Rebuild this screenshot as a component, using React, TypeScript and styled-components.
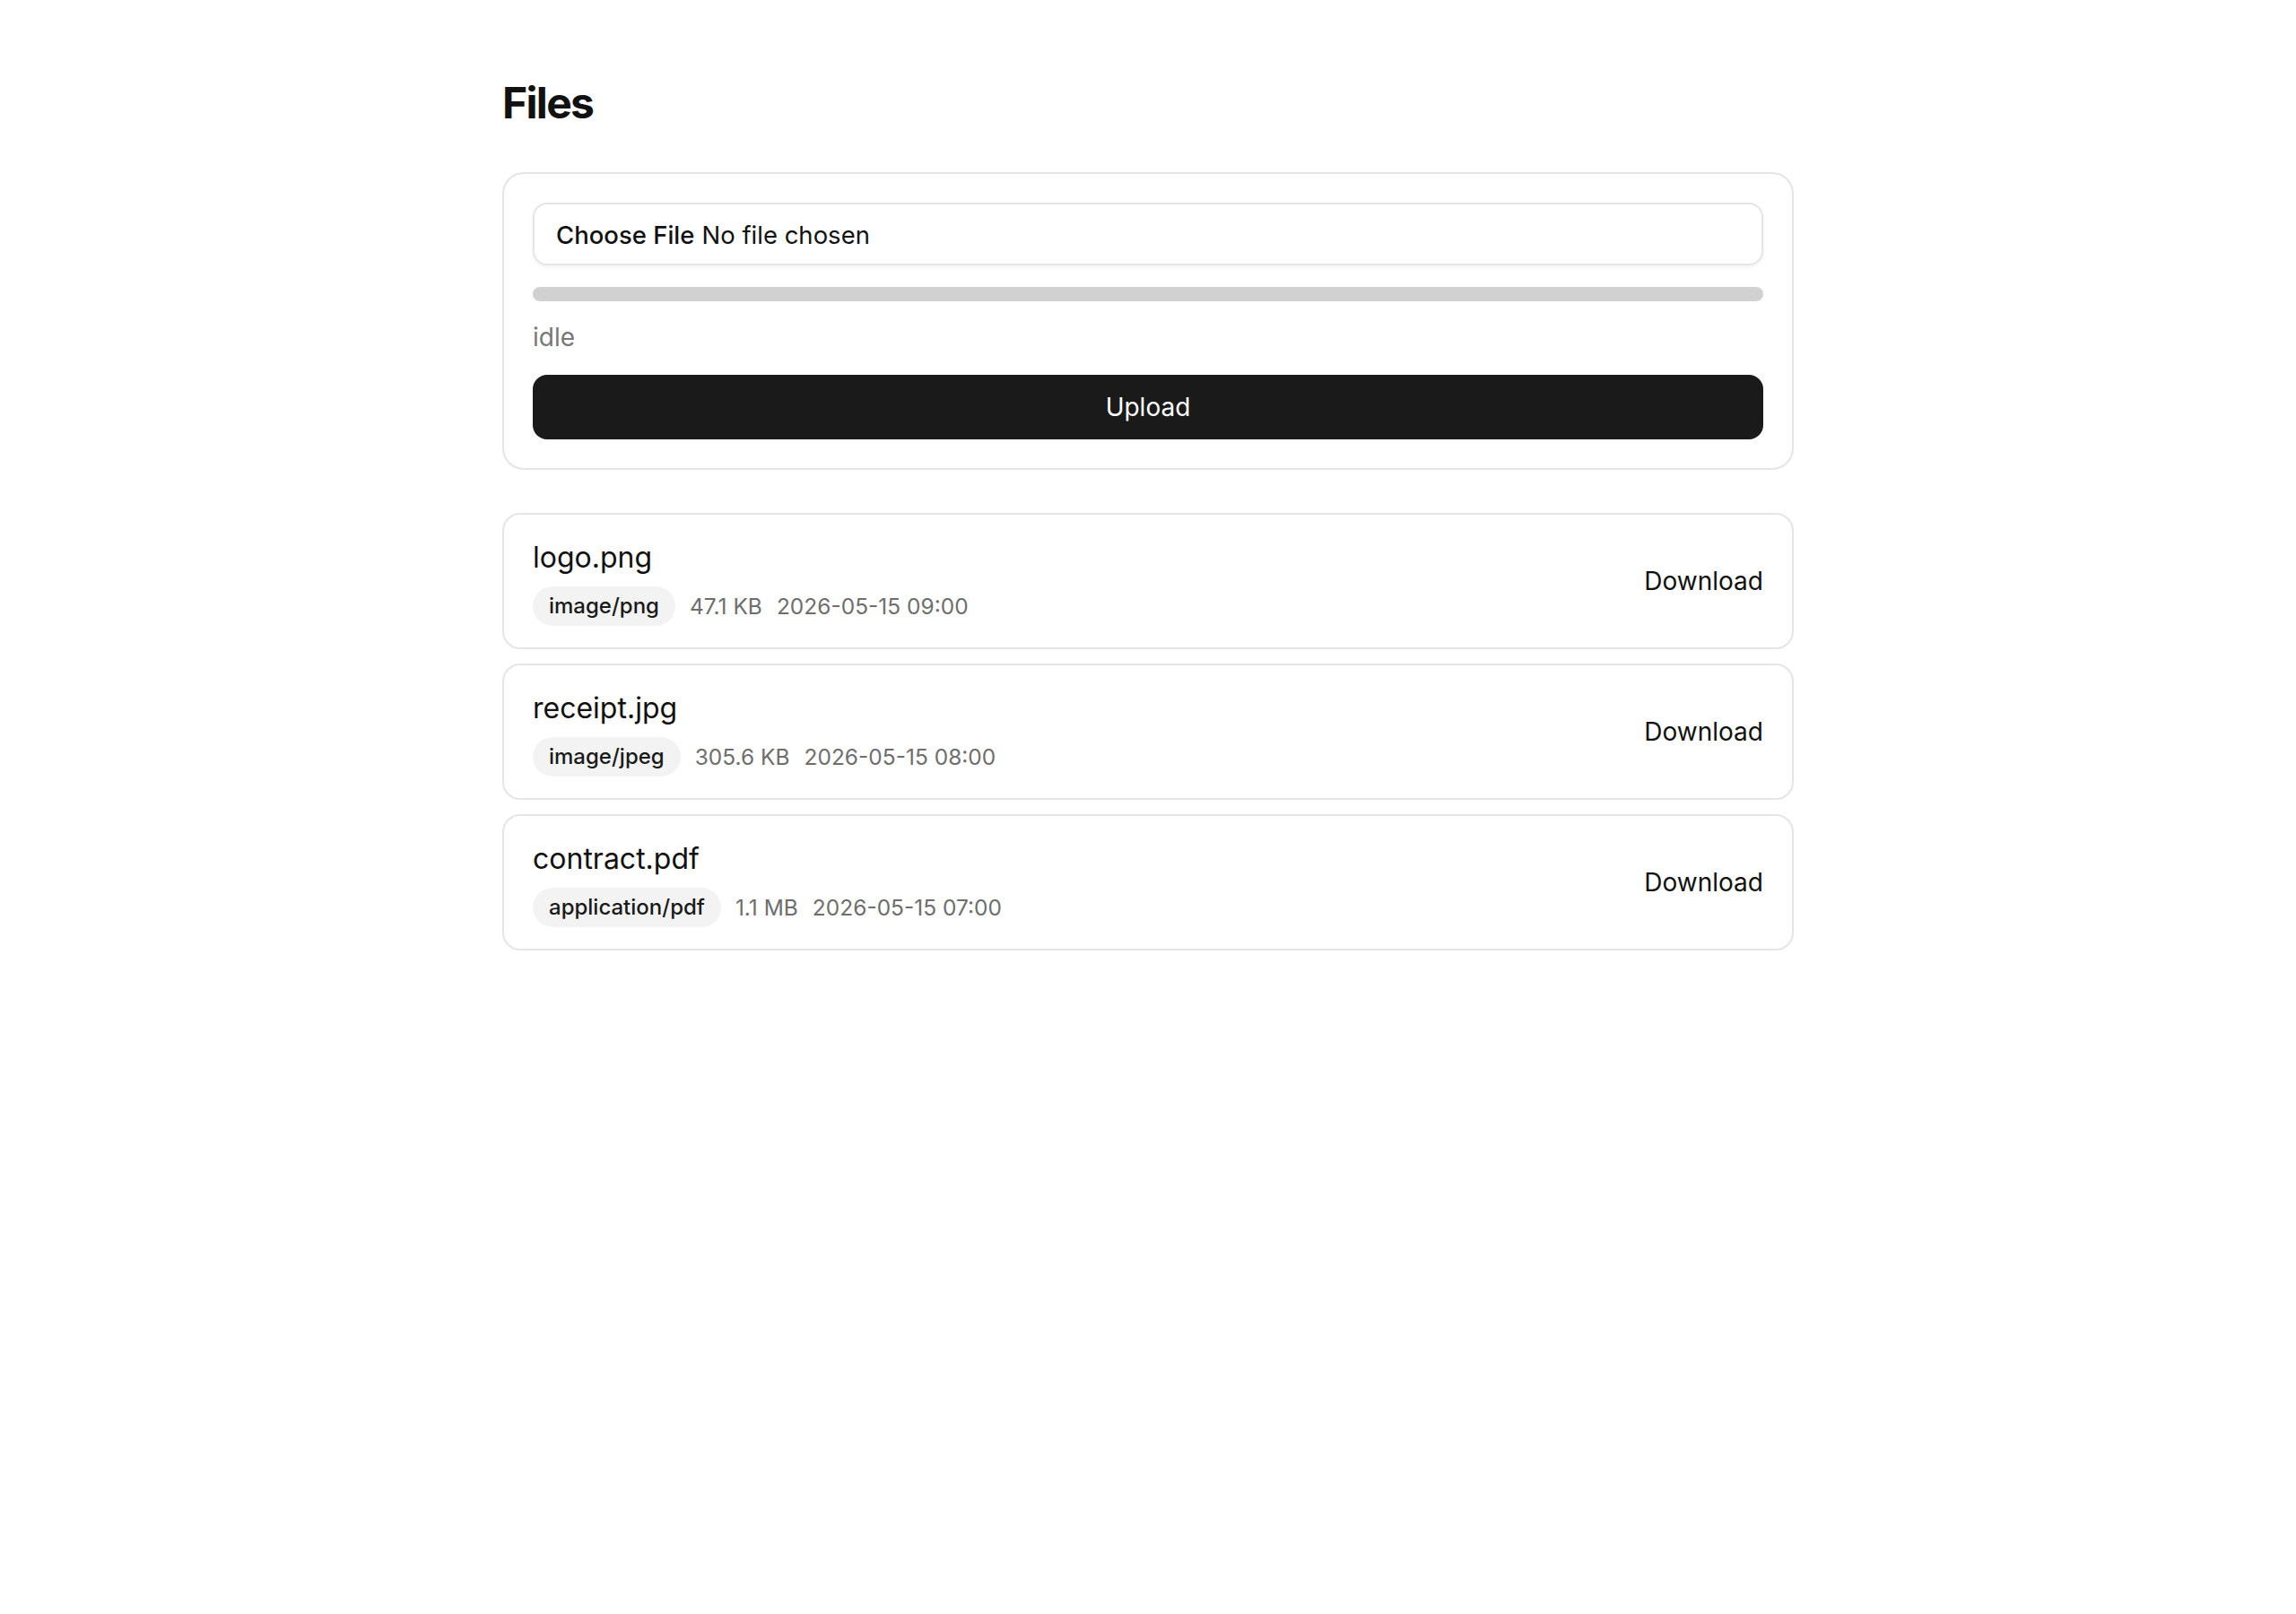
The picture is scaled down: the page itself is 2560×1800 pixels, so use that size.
import React, { useState } from 'react';
import styled, { createGlobalStyle } from 'styled-components';

type FileItem = {
  id: string;
  name: string;
  mime: string;
  size: string;
  createdAt: string;
};

const files: FileItem[] = [
  { id: '1', name: 'logo.png', mime: 'image/png', size: '47.1 KB', createdAt: '2026-05-15 09:00' },
  { id: '2', name: 'receipt.jpg', mime: 'image/jpeg', size: '305.6 KB', createdAt: '2026-05-15 08:00' },
  { id: '3', name: 'contract.pdf', mime: 'application/pdf', size: '1.1 MB', createdAt: '2026-05-15 07:00' },
];

const GlobalStyle = createGlobalStyle`
  * {
    box-sizing: border-box;
  }

  body {
    margin: 0;
    background: #ffffff;
    color: #111111;
    font-family: Inter, 'Liberation Sans', sans-serif;
  }
`;

const StyledPage = styled.main`
  width: 1440px;
  margin: 0 auto;
  padding-top: 86px;
`;

const StyledTitle = styled.h1`
  margin: 0 0 48px;
  font-size: 48px;
  font-weight: 700;
  letter-spacing: -0.035em;
  line-height: 1.21;
`;

const StyledCard = styled.section`
  display: flex;
  flex-direction: column;
  gap: 24px;
  padding: 32px;
  border: 2px solid #e5e5e5;
  border-radius: 24px;
  background: #ffffff;
`;

const StyledFilePicker = styled.label`
  display: flex;
  align-items: center;
  gap: 8px;
  height: 70px;
  padding: 2px 24px 0;
  border: 2px solid #e5e5e5;
  border-radius: 16px;
  box-shadow: 0 2px 4px rgba(0, 0, 0, 0.05);
  font-size: 27.5px;
  color: #111111;
  cursor: pointer;

  input {
    display: none;
  }
`;

const StyledChooseLabel = styled.span`
  font-weight: 500;
`;

const StyledProgress = styled.div`
  height: 16px;
  border-radius: 8px;
  background: #d1d1d1;
  overflow: hidden;
`;

const StyledProgressFill = styled.div`
  height: 100%;
  background: #1a1a1a;
`;

const StyledStatus = styled.div`
  font-size: 28px;
  line-height: 33.6px;
  color: #777777;
`;

const StyledUploadButton = styled.button`
  height: 72px;
  border: none;
  border-radius: 16px;
  background: #1a1a1a;
  color: #ffffff;
  font-family: inherit;
  font-size: 28px;
  cursor: pointer;
`;

const StyledList = styled.ul`
  display: flex;
  flex-direction: column;
  gap: 16px;
  margin: 48px 0 0;
  padding: 0;
  list-style: none;
`;

const StyledRow = styled.li`
  display: flex;
  align-items: center;
  justify-content: space-between;
  padding: 24px 32px;
  border: 2px solid #e5e5e5;
  border-radius: 20px;
`;

const StyledInfo = styled.div`
  display: flex;
  flex-direction: column;
  gap: 8px;
`;

const StyledName = styled.div`
  font-size: 32px;
  line-height: 48px;
  color: #111111;
`;

const StyledMeta = styled.div`
  display: flex;
  align-items: center;
  gap: 16px;
  font-size: 24.5px;
  color: #6e6e6e;
`;

const StyledBadge = styled.span`
  display: inline-flex;
  align-items: center;
  height: 44px;
  padding: 0 18px;
  border-radius: 22px;
  background: #f3f3f3;
  color: #1a1a1a;
  font-size: 24px;
  font-weight: 500;
`;

const StyledDownload = styled.button`
  padding: 0;
  border: none;
  background: none;
  color: #111111;
  font-family: inherit;
  font-size: 28px;
  cursor: pointer;
`;

const App: React.FC = () => {
  const [fileName, setFileName] = useState<string | null>(null);
  const [progress] = useState(0);
  const [status] = useState('idle');

  return (
    <>
      <GlobalStyle />
      <StyledPage>
        <StyledTitle>Files</StyledTitle>
        <StyledCard>
          <StyledFilePicker>
            <input type="file" onChange={(e) => setFileName(e.target.files?.[0]?.name ?? null)} />
            <StyledChooseLabel>Choose File</StyledChooseLabel>
            <span>{fileName ?? 'No file chosen'}</span>
          </StyledFilePicker>
          <StyledProgress>
            <StyledProgressFill style={{ width: `${progress}%` }} />
          </StyledProgress>
          <StyledStatus>{status}</StyledStatus>
          <StyledUploadButton>Upload</StyledUploadButton>
        </StyledCard>
        <StyledList>
          {files.map((file) => (
            <StyledRow key={file.id}>
              <StyledInfo>
                <StyledName>{file.name}</StyledName>
                <StyledMeta>
                  <StyledBadge>{file.mime}</StyledBadge>
                  <span>{file.size}</span>
                  <span>{file.createdAt}</span>
                </StyledMeta>
              </StyledInfo>
              <StyledDownload>Download</StyledDownload>
            </StyledRow>
          ))}
        </StyledList>
      </StyledPage>
    </>
  );
};

export default App;
